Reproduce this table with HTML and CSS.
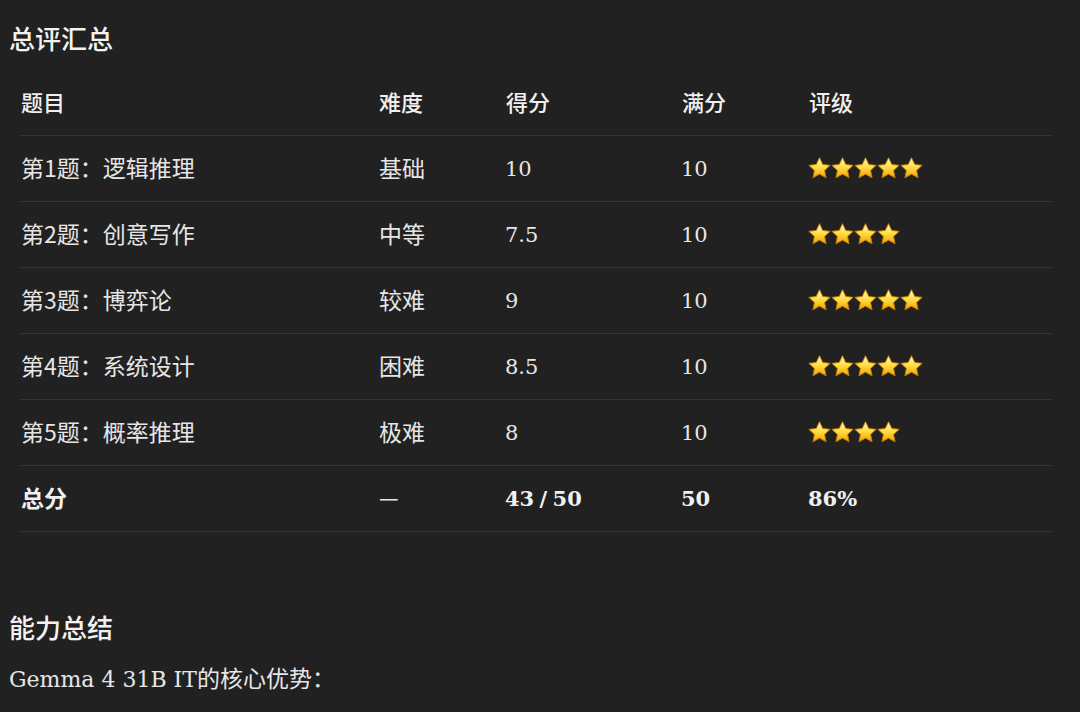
FILE: index.html
```html
<!DOCTYPE html>
<html lang="zh-CN">
<head>
<meta charset="utf-8">
<title>总评汇总</title>
<link rel="stylesheet" href="styles.css">
</head>
<body>
<svg width="0" height="0" class="defs">
  <defs>
    <linearGradient id="sg" x1="0" y1="0" x2="0" y2="1">
      <stop offset="0" stop-color="#fffbd0"/>
      <stop offset="0.45" stop-color="#ffe04a"/>
      <stop offset="1" stop-color="#f2a200"/>
    </linearGradient>
    <symbol id="star" viewBox="1 1 22 22">
      <path d="M12 1.6l3.1 6.5 7.1.9-5.3 4.9 1.4 7L12 17.4l-6.3 3.5 1.4-7L1.8 9l7.1-.9z" fill="url(#sg)" stroke="#c27c00" stroke-width="0.9" stroke-linejoin="round"/>
    </symbol>
  </defs>
</svg>
<main class="page">
  <h2 class="title">总评汇总</h2>
  <div class="table">
    <div class="row head">
      <div class="cell">题目</div><div class="cell">难度</div><div class="cell">得分</div><div class="cell">满分</div><div class="cell">评级</div>
    </div>
    <div class="row">
      <div class="cell">第1题：逻辑推理</div><div class="cell">基础</div><div class="cell num">10</div><div class="cell num">10</div>
      <div class="cell stars"><svg class="s"><use href="#star"/></svg><svg class="s"><use href="#star"/></svg><svg class="s"><use href="#star"/></svg><svg class="s"><use href="#star"/></svg><svg class="s"><use href="#star"/></svg></div>
    </div>
    <div class="row">
      <div class="cell">第2题：创意写作</div><div class="cell">中等</div><div class="cell num">7.5</div><div class="cell num">10</div>
      <div class="cell stars"><svg class="s"><use href="#star"/></svg><svg class="s"><use href="#star"/></svg><svg class="s"><use href="#star"/></svg><svg class="s"><use href="#star"/></svg></div>
    </div>
    <div class="row">
      <div class="cell">第3题：博弈论</div><div class="cell">较难</div><div class="cell num">9</div><div class="cell num">10</div>
      <div class="cell stars"><svg class="s"><use href="#star"/></svg><svg class="s"><use href="#star"/></svg><svg class="s"><use href="#star"/></svg><svg class="s"><use href="#star"/></svg><svg class="s"><use href="#star"/></svg></div>
    </div>
    <div class="row">
      <div class="cell">第4题：系统设计</div><div class="cell">困难</div><div class="cell num">8.5</div><div class="cell num">10</div>
      <div class="cell stars"><svg class="s"><use href="#star"/></svg><svg class="s"><use href="#star"/></svg><svg class="s"><use href="#star"/></svg><svg class="s"><use href="#star"/></svg><svg class="s"><use href="#star"/></svg></div>
    </div>
    <div class="row">
      <div class="cell">第5题：概率推理</div><div class="cell">极难</div><div class="cell num">8</div><div class="cell num">10</div>
      <div class="cell stars"><svg class="s"><use href="#star"/></svg><svg class="s"><use href="#star"/></svg><svg class="s"><use href="#star"/></svg><svg class="s"><use href="#star"/></svg></div>
    </div>
    <div class="row total">
      <div class="cell strong">总分</div><div class="cell dash">—</div><div class="cell num strong">43 / 50</div><div class="cell num strong">50</div><div class="cell num strong">86%</div>
    </div>
  </div>
  <h2 class="title second">能力总结</h2>
  <p class="lead"><span class="latin">Gemma 4 31B IT</span>的核心优势：</p>
</main>
</body>
</html>
```

FILE: styles.css
```css
html, body {
  margin: 0;
  padding: 0;
  background: #212121;
}
.defs {
  position: absolute;
  width: 0;
  height: 0;
}
.page {
  padding: 18px 0 0 9px;
  color: #e6e6e6;
  font-family: "Noto Sans CJK SC", sans-serif;
  font-size: 23px;
}
.title {
  margin: 0;
  font-size: 26px;
  font-weight: 500;
  line-height: 40px;
  color: #f2f2f2;
}
.table {
  margin: 12px 0 0 11px;
  width: 1032px;
}
.row {
  display: grid;
  grid-template-columns: 358px 127px 176px 127px 1fr;
  height: 65px;
  align-items: center;
  border-bottom: 1px solid #343434;
}
.cell {
  padding: 0 0 4px 1px;
  white-space: nowrap;
}
.num {
  padding: 0;
  font-family: "DejaVu Serif", serif;
  font-size: 21px;
}
.head .cell {
  font-size: 22px;
  font-weight: 500;
  color: #f0f0f0;
}
.strong {
  font-weight: 600;
  color: #f0f0f0;
}
.total .num {
  word-spacing: -2px;
}
.dash {
  font-size: 22px;
  padding-bottom: 6px;
}
.stars {
  display: flex;
  align-items: center;
  padding: 0;
}
.s {
  width: 23px;
  height: 23px;
}
.second {
  margin-top: 75px;
}
.lead {
  margin: 13px 0 0;
  line-height: 34px;
}
.latin {
  font-family: "DejaVu Serif", serif;
  font-size: 22px;
}
```
